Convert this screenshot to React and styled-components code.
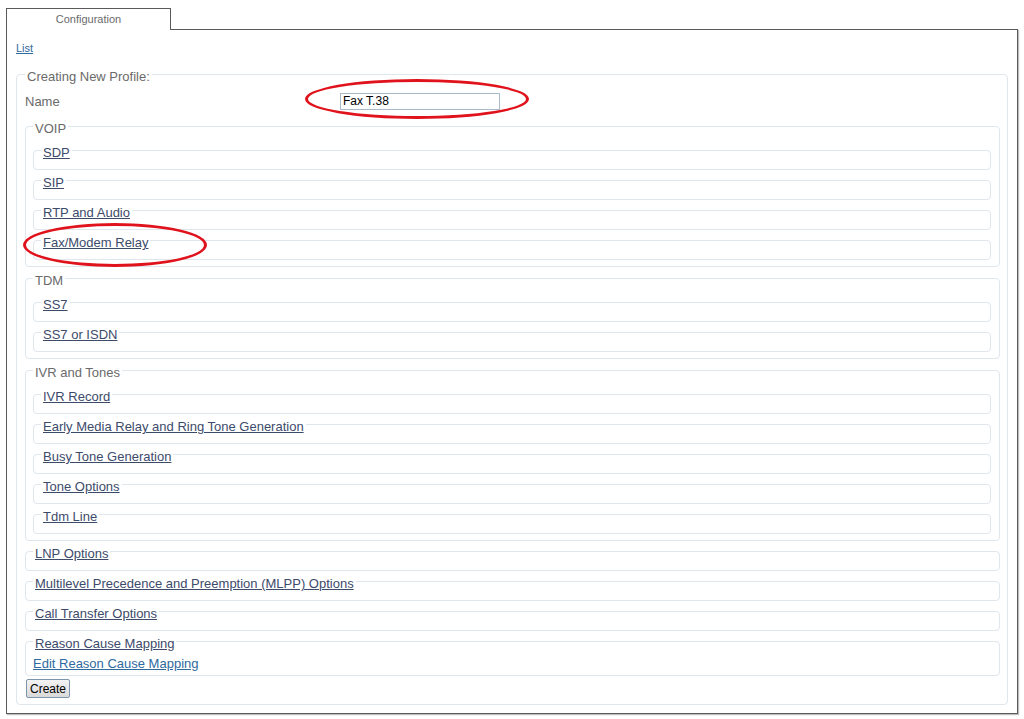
import React from 'react';
import styled, { createGlobalStyle } from 'styled-components';

const GlobalStyle = createGlobalStyle`
  html, body {
    margin: 0;
    padding: 0;
    background: #ffffff;
  }
  body {
    font-family: "Liberation Sans", Arial, Helvetica, sans-serif;
  }
`;

const Page = styled.div`
  position: relative;
  width: 1024px;
  height: 719px;
  padding: 8px 0 0 6px;
  box-sizing: border-box;
`;

const TabStrip = styled.div`
  display: flex;
`;

const Tab = styled.div`
  width: 165px;
  height: 22px;
  box-sizing: border-box;
  border: 1px solid #5a5a5a;
  border-bottom: none;
  background: #fff;
  margin-bottom: -1px;
  padding-bottom: 2px;
  position: relative;
  z-index: 1;
  display: flex;
  align-items: center;
  justify-content: center;
  font-size: 11px;
  color: #6a6a6a;
`;

const Panel = styled.div`
  width: 1012px;
  height: 685px;
  box-sizing: border-box;
  border: 1px solid #5a5a5a;
  box-shadow: 1px 1px 1px rgba(0, 0, 0, 0.25);
  padding: 11px 9px 0 9px;
`;

const SmallLink = styled.a`
  display: block;
  width: max-content;
  font-size: 11px;
  line-height: 14px;
  color: #2f6a9e;
  text-decoration: underline;
`;

const Fieldset = styled.fieldset`
  margin: ${(p) => p.$mb || '0'};
  min-width: 0;
  border: 1px solid #dfe6ec;
  border-radius: 4px;
  padding: ${(p) => p.$pad || '0 7px 12px 7px'};
`;

const Legend = styled.legend`
  padding: 0 2px;
  font-size: 13px;
  line-height: 14px;
  color: #6a6a6a;
`;

/* legend text sits a little below the fieldset's top line */
const LegendText = styled.span`
  display: block;
  position: relative;
  top: 3px;
`;

const LegendLink = styled.a`
  display: block;
  position: relative;
  top: 3px;
  font-size: 13px;
  line-height: 14px;
  color: #3d4b6b;
  text-decoration: underline;
`;

const EditLink = styled.a`
  display: block;
  width: max-content;
  font-size: 13px;
  line-height: 14px;
  color: #2f6a9e;
  text-decoration: underline;
`;

const NameRow = styled.div`
  display: flex;
  align-items: center;
  height: 20px;
  margin-bottom: 8px;
`;

const Label = styled.span`
  width: 315px;
  font-size: 13px;
  color: #6a6a6a;
`;

const TextInput = styled.input`
  width: 160px;
  height: 17px;
  box-sizing: border-box;
  border: 1px solid #a9bacb;
  padding: 0 2px;
  font-family: "Liberation Sans", Arial, sans-serif;
  font-size: 12px;
  color: #000;
  outline: none;
`;

const CreateButton = styled.button`
  display: block;
  margin: 3px 0 0 1px;
  width: 44px;
  height: 19px;
  padding: 0;
  font-family: "Liberation Sans", Arial, sans-serif;
  font-size: 12px;
  color: #000;
  background: linear-gradient(#f4f4f4, #d9d9d9);
  border: 1px solid #7d95ad;
  border-radius: 2px;
`;

const Ellipse = styled.div`
  position: absolute;
  left: ${(p) => p.$x}px;
  top: ${(p) => p.$y}px;
  width: ${(p) => p.$w}px;
  height: ${(p) => p.$h}px;
  box-sizing: border-box;
  border: 3px solid #e0131c;
  border-radius: 50%;
  pointer-events: none;
`;

function Item({ label, last }) {
  return (
    <Fieldset $mb={last ? '0' : '0 0 3px 0'}>
      <Legend>
        <LegendLink href="#">{label}</LegendLink>
      </Legend>
    </Fieldset>
  );
}

function Group({ title, items, mb }) {
  return (
    <Fieldset $mb={mb} $pad="10px 8px 6px 7px">
      <Legend>
        <LegendText>{title}</LegendText>
      </Legend>
      {items.map((it, i) => (
        <Item key={it} label={it} last={i === items.length - 1} />
      ))}
    </Fieldset>
  );
}

export default function App() {
  return (
    <Page>
      <GlobalStyle />
      <TabStrip>
        <Tab>Configuration</Tab>
      </TabStrip>
      <Panel>
        <SmallLink href="#">List</SmallLink>
        <Fieldset $mb="12px 0 0 0" $pad="10px 7px 6px 8px">
          <Legend>
            <LegendText>Creating New Profile:</LegendText>
          </Legend>
          <NameRow>
            <Label>Name</Label>
            <TextInput defaultValue="Fax T.38" />
          </NameRow>
          <Group
            title="VOIP"
            mb="0 0 4px 0"
            items={['SDP', 'SIP', 'RTP and Audio', 'Fax/Modem Relay']}
          />
          <Group title="TDM" mb="0 0 4px 0" items={['SS7', 'SS7 or ISDN']} />
          <Group
            title="IVR and Tones"
            mb="0 0 3px 0"
            items={[
              'IVR Record',
              'Early Media Relay and Ring Tone Generation',
              'Busy Tone Generation',
              'Tone Options',
              'Tdm Line',
            ]}
          />
          <Item label="LNP Options" />
          <Item label="Multilevel Precedence and Preemption (MLPP) Options" />
          <Item label="Call Transfer Options" />
          <Fieldset $pad="9px 7px 4px 7px">
            <Legend>
              <LegendLink href="#">Reason Cause Mapping</LegendLink>
            </Legend>
            <EditLink href="#">Edit Reason Cause Mapping</EditLink>
          </Fieldset>
          <CreateButton>Create</CreateButton>
        </Fieldset>
      </Panel>
      <Ellipse $x={305} $y={79} $w={224} $h={40} />
      <Ellipse $x={23} $y={223} $w={184} $h={44} />
    </Page>
  );
}
